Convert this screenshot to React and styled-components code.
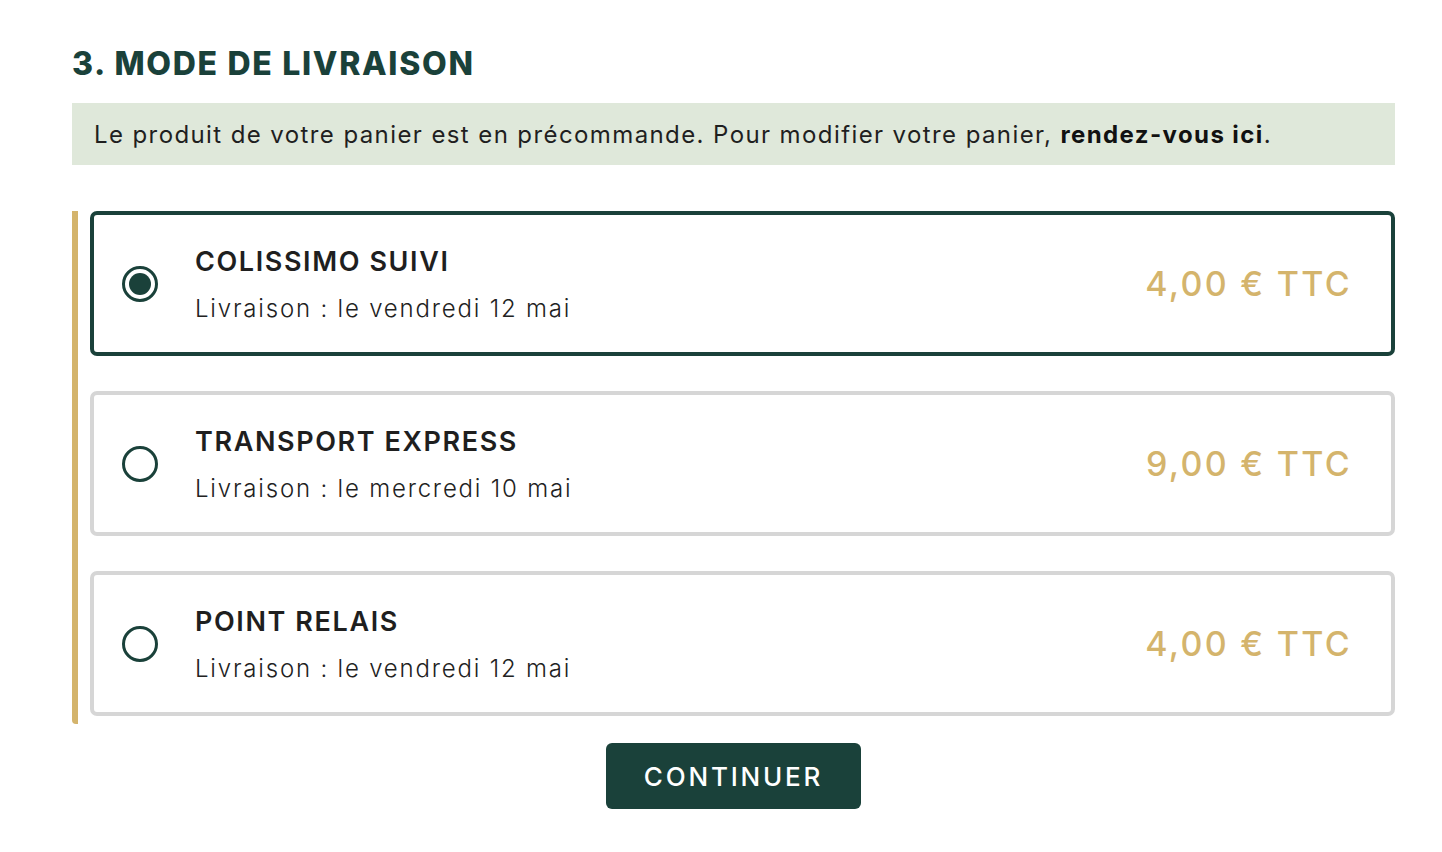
import React, { useState } from 'react';
import styled, { createGlobalStyle } from 'styled-components';

const GlobalStyle = createGlobalStyle`
  body {
    margin: 0;
    background: #ffffff;
    font-family: Inter, "Noto Sans", sans-serif;
    color: #1f1f1f;
  }
`;

const Section = styled.section`
  width: 1323px;
  margin-left: 72px;
  padding-top: 44px;
`;

const Title = styled.h2`
  margin: 0;
  font-size: 32px;
  line-height: 40px;
  font-weight: 800;
  color: #1a413a;
  letter-spacing: 1.7px;
`;

const Notice = styled.p`
  margin: 19px 0 0;
  background: #dfe8da;
  height: 62px;
  display: flex;
  align-items: center;
  padding: 0 22px;
  box-sizing: border-box;
  font-size: 24px;
  letter-spacing: 1.4px;
  color: #1f1f1f;

  strong {
    font-weight: 700;
    color: #111;
  }
`;

const Options = styled.div`
  margin-top: 46px;
  display: flex;
  flex-direction: column;
  gap: 35px;
  padding-left: 12px;
  padding-bottom: 8px;
  border-left: 6px solid #d4b46c;
  border-bottom-left-radius: 4px;
  box-sizing: border-box;
`;

const Card = styled.label`
  display: flex;
  align-items: center;
  height: 145px;
  box-sizing: border-box;
  border: 4px solid ${(p) => (p.$selected ? '#1a413a' : '#d6d6d6')};
  border-radius: 7px;
  padding: 0 39px 0 28px;
  cursor: pointer;
  background: #fff;
`;

const Radio = styled.span`
  width: 36px;
  height: 36px;
  box-sizing: border-box;
  border-radius: 50%;
  border: 3px solid #1a413a;
  display: flex;
  align-items: center;
  justify-content: center;
  flex-shrink: 0;

  &::after {
    content: '';
    width: 22px;
    height: 22px;
    border-radius: 50%;
    background: #1a413a;
    display: ${(p) => (p.$checked ? 'block' : 'none')};
  }
`;

const Info = styled.div`
  margin-left: 37px;
  flex: 1;
  display: flex;
  flex-direction: column;
  gap: 16px;
`;

const Name = styled.span`
  font-size: 27px;
  font-weight: 600;
  color: #1f1f1f;
  letter-spacing: 1.6px;
`;

const Delivery = styled.span`
  font-size: 24px;
  font-weight: 300;
  color: #222;
  letter-spacing: 1.8px;
`;

const Price = styled.span`
  font-size: 34px;
  font-weight: 500;
  color: #d4b46c;
  letter-spacing: 2.3px;
`;

const Actions = styled.div`
  display: flex;
  justify-content: center;
  margin-top: 19px;
`;

const Button = styled.button`
  width: 255px;
  height: 66px;
  border: none;
  border-radius: 6px;
  background: #1a413a;
  color: #fff;
  font-family: inherit;
  font-size: 26px;
  font-weight: 500;
  letter-spacing: 2.8px;
  cursor: pointer;
`;

const options = [
  { id: 'colissimo', name: 'COLISSIMO SUIVI', date: 'Livraison : le vendredi 12 mai', price: '4,00 € TTC' },
  { id: 'express', name: 'TRANSPORT EXPRESS', date: 'Livraison : le mercredi 10 mai', price: '9,00 € TTC' },
  { id: 'relais', name: 'POINT RELAIS', date: 'Livraison : le vendredi 12 mai', price: '4,00 € TTC' },
];

export default function App() {
  const [selected, setSelected] = useState('colissimo');

  return (
    <>
      <GlobalStyle />
      <Section>
        <Title>3. MODE DE LIVRAISON</Title>
        <Notice>
          <span>
            Le produit de votre panier est en précommande. Pour modifier votre panier,{' '}
            <strong>rendez-vous ici</strong>.
          </span>
        </Notice>
        <Options>
          {options.map((o) => (
            <Card key={o.id} $selected={selected === o.id} onClick={() => setSelected(o.id)}>
              <Radio $checked={selected === o.id} />
              <Info>
                <Name>{o.name}</Name>
                <Delivery>{o.date}</Delivery>
              </Info>
              <Price>{o.price}</Price>
            </Card>
          ))}
        </Options>
        <Actions>
          <Button type="button">CONTINUER</Button>
        </Actions>
      </Section>
    </>
  );
}
